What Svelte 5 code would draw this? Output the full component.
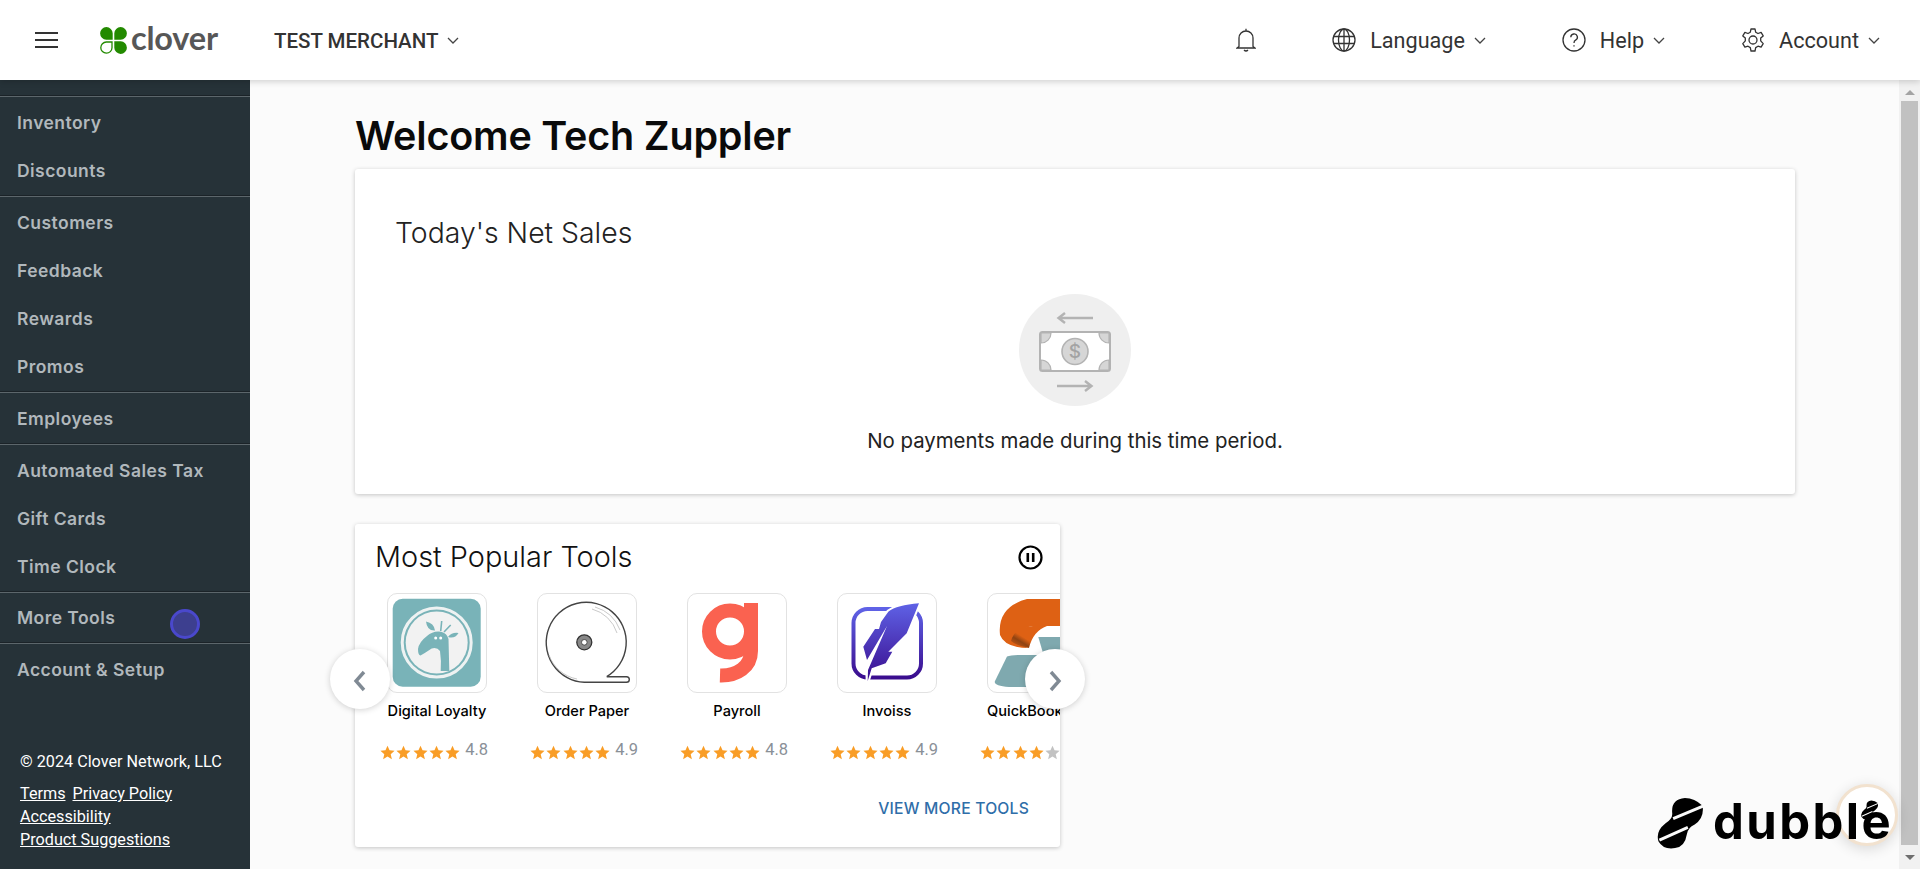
<script>
  const navGroups = [
    { items: ['Inventory', 'Discounts'] },
    { items: ['Customers', 'Feedback', 'Rewards', 'Promos'] },
    { items: ['Employees'] },
    { items: ['Automated Sales Tax', 'Gift Cards', 'Time Clock'] },
    { items: ['More Tools'], tight: true },
    { items: ['Account & Setup'] }
  ];
  const tools = [
    { name: 'Digital Loyalty', rating: '4.8', icon: 'giraffe', stars: 5 },
    { name: 'Order Paper', rating: '4.9', icon: 'paper', stars: 5 },
    { name: 'Payroll', rating: '4.8', icon: 'g', stars: 5 },
    { name: 'Invoiss', rating: '4.9', icon: 'feather', stars: 5 },
    { name: 'QuickBooks', rating: '4.2', icon: 'qb', stars: 4, clip: true }
  ];
  const starPath = 'M7 0.6 L8.9 5 L13.6 5.4 L10 8.6 L11.1 13.3 L7 10.8 L2.9 13.3 L4 8.6 L0.4 5.4 L5.1 5 Z';
</script>

<div class="shell">
  <header class="topbar">
    <div class="burger"><span></span><span></span><span></span></div>
    <div class="brand">
      <svg class="leaf" viewBox="0 0 27 27" aria-hidden="true">
        <path fill="#238a00" d="M12.7 12.7 H6.3 A6.3 6.3 0 1 1 12.7 6.3 Z"/>
        <path fill="#238a00" d="M14.3 12.7 H20.7 A6.3 6.3 0 1 0 14.3 6.3 Z"/>
        <path fill="#238a00" d="M14.3 14.3 H20.7 A6.3 6.3 0 1 1 14.3 20.7 Z"/>
        <path fill="none" stroke="#238a00" stroke-width="1.3" d="M12 15 H6.3 A5.6 5.6 0 1 0 12 20.7 Z"/>
      </svg>
      <span class="wordmark">clover</span>
    </div>
    <button class="merchant"><span>TEST MERCHANT</span>
      <svg class="chev" viewBox="0 0 12 7"><path d="M1 1 L6 6 L11 1"/></svg>
    </button>
    <div class="top-right">
      <svg class="ico bell" viewBox="0 0 20 24"><path d="M3 18.5 V10 A7 7 0 0 1 17 10 V18.5 L19 20 H1 Z M10 3 V0.8 M8 22 Q10 24 12 22"/></svg>
      <button class="top-item">
        <svg class="ico" viewBox="0 0 24 24"><circle cx="12" cy="12" r="11"/><ellipse cx="12" cy="12" rx="5.5" ry="11"/><path d="M12 1 V23 M1.5 8.5 H22.5 M1.5 15.5 H22.5"/></svg>
        <span>Language</span>
        <svg class="chev" viewBox="0 0 12 7"><path d="M1 1 L6 6 L11 1"/></svg>
      </button>
      <button class="top-item">
        <svg class="ico" viewBox="0 0 24 24"><circle cx="12" cy="12" r="11"/><path d="M8.8 9.2 A3.3 3.3 0 1 1 13.6 12.2 Q12 13 12 15 M12 17.2 V18.6"/></svg>
        <span>Help</span>
        <svg class="chev" viewBox="0 0 12 7"><path d="M1 1 L6 6 L11 1"/></svg>
      </button>
      <button class="top-item">
        <svg class="ico" viewBox="0 0 24 24"><path d="M10 1 H14 L14.7 4.2 L17 5.5 L20.1 4.4 L22.2 7.9 L19.7 10.1 V12.9 L22.2 15.6 L20.1 19.2 L17 18.2 L14.7 19.6 L14 23 H10 L9.3 19.6 L7 18.2 L3.9 19.2 L1.8 15.6 L4.3 12.9 V10.1 L1.8 7.9 L3.9 4.4 L7 5.5 L9.3 4.2 Z" stroke-linejoin="round"/><circle cx="12" cy="12" r="4"/></svg>
        <span>Account</span>
        <svg class="chev" viewBox="0 0 12 7"><path d="M1 1 L6 6 L11 1"/></svg>
      </button>
    </div>
  </header>

  <div class="body">
    <aside class="sidebar">
      <nav class="nav">
        {#each navGroups as group}
          <div class="divider"></div>
          <div class="group" class:tight={group.tight}>
            {#each group.items as item}
              <a class="nav-link" href="#top">{item}</a>
            {/each}
          </div>
        {/each}
      </nav>
      <footer class="legal">
        <p class="copy">© 2024 Clover Network, LLC</p>
        <p class="links"><a href="#top">Terms</a><a href="#top">Privacy Policy</a></p>
        <p class="links"><a href="#top">Accessibility</a></p>
        <p class="links"><a href="#top">Product Suggestions</a></p>
      </footer>
      <span class="cursor"></span>
    </aside>

    <main class="main">
      <h1>Welcome Tech Zuppler</h1>

      <section class="card sales">
        <h2>Today's Net Sales</h2>
        <svg class="money" viewBox="0 0 112 112" aria-hidden="true">
          <circle cx="56" cy="56" r="56" fill="#efefef"/>
          <g fill="none" stroke="#b3b3b3" stroke-width="2.4">
            <path d="M74 24 H40 M46 19 L39.5 24 L46 29"/>
            <path d="M38 92 H72 M66 87 L72.5 92 L66 97"/>
          </g>
          <rect x="21" y="38" width="70" height="39" rx="2.5" fill="#fff" stroke="#b3b3b3" stroke-width="2"/>
          <g fill="#d6d6d6" stroke="#b3b3b3" stroke-width="1.2">
            <path d="M22 39 H32 A10 10 0 0 1 22 49 Z"/>
            <path d="M90 39 H80 A10 10 0 0 0 90 49 Z"/>
            <path d="M22 76 H32 A10 10 0 0 0 22 66 Z"/>
            <path d="M90 76 H80 A10 10 0 0 1 90 66 Z"/>
          </g>
          <circle cx="56" cy="57.5" r="13" fill="#d6d6d6" stroke="#b3b3b3" stroke-width="1.6"/>
          <text x="56" y="64" text-anchor="middle" class="dollar">$</text>
        </svg>
        <p class="empty">No payments made during this time period.</p>
      </section>

      <section class="card tools">
        <div class="tools-head">
          <h2>Most Popular Tools</h2>
          <svg class="pause" viewBox="0 0 25 25"><circle cx="12.5" cy="12.5" r="11" fill="none" stroke="#000" stroke-width="2.2"/><path d="M9.8 8 V17 M15.2 8 V17" stroke="#000" stroke-width="2.6"/></svg>
        </div>
        <div class="carousel">
          {#each tools as tool}
            <article class="tile">
              <div class="tile-icon">
                <svg viewBox="0 0 100 100" aria-hidden="true">
                  {#if tool.icon === 'giraffe'}
                    <rect x="5.7" y="5.7" width="88" height="88" rx="10" fill="#79b3b8"/>
                    <circle cx="49.7" cy="49.5" r="34.5" fill="none" stroke="#eef2f2" stroke-width="3"/>
                    <circle cx="49.7" cy="49.5" r="31" fill="#f2f2f2"/>
                    <path fill="#79b3b8" d="M53.7 78 L62.3 78 L61.5 46 Q60 40 54 38.7 Q46 37.5 40 43 Q32 49 31 56 Q31 62 33.5 62.5 Q38 60 44.7 55.5 Q50 54 53 58 Q54.5 68 53.7 78 Z"/>
                    <path fill="#79b3b8" d="M39 28.5 Q47 30 48 37.5 Q40 38 39 28.5 Z M61 44 Q65 39 71.5 40 Q68 46 61 44 Z"/>
                    <path stroke="#79b3b8" stroke-width="1.6" fill="none" d="M54.7 28 L53.7 38 M63.7 32 L57 39"/>
                    <circle cx="48.7" cy="45" r="1.5" fill="#fff"/><circle cx="53.7" cy="45" r="1.5" fill="#fff"/>
                  {:else if tool.icon === 'paper'}
                    <path fill="none" stroke="#444" stroke-width="1.4" d="M69.7 83.7 A40 40 0 1 0 47.3 89.3 H89.5 A2.8 2.8 0 0 0 89.5 83.7 H69.7"/>
                    <path fill="none" stroke="#bbb" stroke-width="0.8" d="M58 14 A38 38 0 0 1 83 37 M55 16 A36 36 0 0 1 80 40 M12 62 A37 37 0 0 0 40 86"/>
                    <circle cx="47.3" cy="49.3" r="7.5" fill="#888" stroke="#333" stroke-width="1.3"/>
                    <circle cx="47.3" cy="49.3" r="2.8" fill="#fff" stroke="#333" stroke-width="0.8"/>
                  {:else if tool.icon === 'g'}
                    <circle cx="43" cy="38.5" r="21" fill="none" stroke="#fa6250" stroke-width="14"/>
                    <path fill="none" stroke="#fa6250" stroke-width="14" d="M64 10 V58 C64 74 50 83 33 82.5"/>
                  {:else if tool.icon === 'feather'}
                    <defs>
                      <linearGradient id="inv" x1="0" y1="0" x2="0" y2="1"><stop offset="0" stop-color="#5f62e6"/><stop offset="1" stop-color="#3a0d8e"/></linearGradient>
                    </defs>
                    <rect x="16.5" y="16" width="67.5" height="68.5" rx="14" fill="none" stroke="url(#inv)" stroke-width="4"/>
                    <path fill="#fff" stroke="#fff" stroke-width="4" d="M82 10.3 Q60 12 51.3 18.7 L26.3 53.7 L30 67 L30.7 88 L34.7 75.3 L48.7 70.3 L55.3 58.7 L51.3 58.7 L69.7 40.3 Z"/>
                    <path fill="url(#inv)" d="M82 10.3 Q60 12 51.3 18.7 L44 29 L42 36 L38 36 L26.3 53.7 L30 67 L50 33 L31 77 L30.7 88 L34.7 75.3 L48.7 70.3 L55.3 58.7 L51.3 58.7 L69.7 40.3 Z"/>
                  {:else}
                    <defs>
                      <linearGradient id="qbo" x1="0" y1="1" x2="0.7" y2="0.3"><stop offset="0" stop-color="#de6114"/><stop offset="0.4" stop-color="#8f4312"/><stop offset="0.6" stop-color="#de6114"/></linearGradient>
                    </defs>
                    <path fill="#de6114" d="M40 6 H100 V33 H46 Q36 34 33 42 Q31 52 42 55 Q18 55 13 42 Q10 14 40 6 Z"/>
                    <path fill="url(#qbo)" d="M46 33 H60 Q46 38 42 55 Q28 52 24 48 Q28 34 46 33 Z"/>
                    <path fill="#7fa9af" d="M51.3 44 H100 V60 H56 Z"/>
                    <path fill="#7fa9af" d="M20 63.5 Q24 62 34 62 H100 V94 H22 Q6 93 8 88 Z"/>
                  {/if}
                </svg>
              </div>
              <div class="tile-name" class:clip={tool.clip}>{tool.name}</div>
              <div class="tile-rating">
                <span class="stars">
                  {#each [0, 1, 2, 3, 4] as i}
                    <svg class="star" viewBox="0 0 14 14" class:off={i >= tool.stars}><path d={starPath}/></svg>
                  {/each}
                </span>
                <span class="score">{tool.rating}</span>
              </div>
            </article>
          {/each}
        </div>
        <div class="tools-foot"><a href="#top">VIEW MORE TOOLS</a></div>
        <button class="arrow prev" aria-label="Previous"><svg viewBox="0 0 14 22"><path d="M11 2 L3 11 L11 20"/></svg></button>
        <button class="arrow next" aria-label="Next"><svg viewBox="0 0 14 22"><path d="M3 2 L11 11 L3 20"/></svg></button>
      </section>
    </main>

    <div class="scrollbar">
      <span class="sb-up"></span>
      <span class="sb-thumb"></span>
      <span class="sb-down"></span>
    </div>
  </div>

  <div class="bubble">
    <svg viewBox="0 0 46 52" aria-hidden="true">
      <path d="M46 8 Q38 0 28 0 Q14 1 15 15 Q16 21 8 26 Q-2 34 1 44 Q6 53 18 51 Q28 50 30 37 Q31 30 38 27 Q48 20 46 8 Z" fill="#000"/>
      <path d="M16 21 L47 8 M2 43 L31 30" stroke="#fff" stroke-width="3"/>
    </svg>
  </div>
  <div class="dubble">
    <svg viewBox="0 0 46 52" aria-hidden="true">
      <path d="M46 8 Q38 0 28 0 Q14 1 15 15 Q16 21 8 26 Q-2 34 1 44 Q6 53 18 51 Q28 50 30 37 Q31 30 38 27 Q48 20 46 8 Z" fill="#000"/>
      <path d="M16 21 L47 8 M2 43 L31 30" stroke="#fafafa" stroke-width="3"/>
    </svg>
    <span>dubble</span>
  </div>
</div>

<style>
  :global(body) { margin: 0; overflow: hidden; background: #fbfbfb; }
  button { background: none; border: 0; padding: 0; font: inherit; color: inherit; }
  p, h1, h2 { margin: 0; }

  .shell { position: relative; height: 869px; display: flex; flex-direction: column; font-family: Roboto, "Liberation Sans", sans-serif; color: #333; overflow: hidden; }

  .topbar { height: 80px; flex: none; display: flex; align-items: center; background: #fff; box-shadow: 0 2px 6px rgba(0,0,0,.16); position: relative; z-index: 2; padding: 0 40px 0 35px; box-sizing: border-box; }
  .burger { width: 23px; display: flex; flex-direction: column; gap: 5px; }
  .burger span { height: 2px; background: #333; }
  .brand { display: flex; align-items: center; margin-left: 42px; gap: 4px; width: 174px; }
  .leaf { width: 27px; height: 27px; flex: none; }
  .wordmark { font: 700 32.5px/1 Lato, sans-serif; color: #575757; letter-spacing: -.2px; margin-top: -4px; }
  .merchant { display: flex; align-items: center; gap: 9px; font: 500 20.5px/1 Roboto, sans-serif; color: #333; }
  .merchant span { margin-top: 2px; }
  .chev { width: 12px; height: 7px; fill: none; stroke: #444; stroke-width: 1.3; flex: none; }
  .top-right { margin-left: auto; display: flex; align-items: center; gap: 76px; }
  .top-item { display: flex; align-items: center; font: 400 21.6px/1 Roboto, sans-serif; color: #333; }
  .top-item span { margin: 2px 9px 0 14px; }
  .ico { width: 24px; height: 24px; fill: none; stroke: #333; stroke-width: 1.3; flex: none; }
  .bell { width: 20px; }

  .body { flex: 1; display: flex; min-height: 0; }

  .sidebar { position: relative; width: 250px; flex: none; background: #263238; padding-top: 15px; box-sizing: border-box; display: flex; flex-direction: column; }
  .divider { height: 2px; box-sizing: border-box; border-top: 1px solid #1b2328; border-bottom: 1px solid #5c666b; }
  .group { padding-top: 2px; display: flex; flex-direction: column; }
  .group.tight { padding-top: 1px; }
  .nav-link { height: 48px; display: flex; align-items: center; padding-left: 17px; font: 600 17.5px/1 Inter, sans-serif; letter-spacing: .45px; color: #b1b8bc; text-decoration: none; }
  .legal { margin-top: auto; padding: 0 0 18px 20px; color: #fff; font: 400 16.2px/20px Roboto, sans-serif; }
  .copy { margin-bottom: 10px; }
  .links { line-height: 23px; display: flex; gap: 7px; }
  .links a { color: #fff; text-decoration: underline; }
  .cursor { position: absolute; left: 170px; top: 529px; width: 30px; height: 30px; box-sizing: border-box; border-radius: 50%; border: 3px solid #4a48cc; background: #3d3f8f; }

  .main { flex: 1; min-width: 0; padding: 33px 104px 0 105px; box-sizing: border-box; }
  h1 { font: 600 39.5px/46px Inter, sans-serif; color: #0a0a0a; margin-bottom: 10px; letter-spacing: -.2px; }
  .card { background: #fff; border-radius: 3px; box-shadow: 0 1px 4px rgba(0,0,0,.22); box-sizing: border-box; }
  .sales { height: 325px; padding: 45px 40px 0; display: flex; flex-direction: column; align-items: center; }
  .sales h2 { align-self: flex-start; font: 300 28.4px/38px Inter, sans-serif; color: #222; }
  .money { width: 112px; height: 112px; margin-top: 42px; flex: none; }
  .dollar { font: 500 19px Inter, sans-serif; fill: #a3a3a3; }
  .empty { margin-top: 21px; font: 400 20.4px/28px Inter, sans-serif; color: #222; }

  .tools { position: relative; margin-top: 30px; width: 705px; height: 323px; }
  .tools-head { height: 66px; padding: 0 17px 0 20px; display: flex; align-items: center; justify-content: space-between; }
  .tools-head h2 { font: 300 28.9px/38px Inter, sans-serif; color: #111; }
  .pause { width: 25px; height: 25px; }
  .carousel { display: flex; overflow: hidden; padding: 3px 0 0 7px; }
  .tile { width: 150px; flex: none; display: flex; flex-direction: column; align-items: center; }
  .tile-icon { width: 100px; height: 100px; box-sizing: border-box; border: 1px solid #e2e2e2; border-radius: 10px; overflow: hidden; background: #fff; flex: none; }
  .tile-icon svg { display: block; width: 100px; height: 100px; margin: -1px; }
  .tile-name { margin-top: 8px; font: 500 14.6px/20px Inter, sans-serif; color: #000; white-space: nowrap; }
  .tile-name.clip { align-self: flex-start; margin-left: 25px; }
  .tile-rating { margin-top: 21px; height: 20px; align-self: flex-start; padding-left: 18px; display: flex; align-items: center; gap: 5px; white-space: nowrap; }
  .stars { display: flex; gap: 1.3px; margin-top: 1px; }
  .star { width: 15px; height: 15px; fill: #f99d26; flex: none; }
  .star.off { fill: #c2c2c2; }
  .score { font: 400 16.5px/1 Roboto, sans-serif; color: #8a9097; margin-top: -3px; }
  .tools-foot { text-align: right; padding: 37px 31px 0 0; }
  .tools-foot a { font: 500 15.7px/20px Inter, sans-serif; color: #2f6ea9; text-decoration: none; letter-spacing: .2px; }
  .arrow { position: absolute; top: 125px; width: 60px; height: 60px; border-radius: 50%; background: #fff; box-shadow: 0 1px 6px rgba(0,0,0,.18); display: flex; align-items: center; justify-content: center; z-index: 1; }
  .arrow svg { width: 14px; height: 22px; fill: none; stroke: #808a94; stroke-width: 3.4; margin-top: 4px; }
  .prev { left: -25px; }
  .next { right: -25px; }

  .scrollbar { width: 21px; flex: none; background: #f1f1f1; display: flex; flex-direction: column; align-items: center; }
  .sb-up, .sb-down { width: 0; height: 0; border-left: 5px solid transparent; border-right: 5px solid transparent; flex: none; }
  .sb-up { border-bottom: 5px solid #a3a3a3; margin: 10px 0 6px; }
  .sb-thumb { width: 17px; height: 744px; background: #c1c1c1; flex: none; }
  .sb-down { border-top: 5px solid #6e6e6e; margin-top: 10px; }

  .bubble { position: absolute; left: 1836px; top: 784px; width: 62px; height: 62px; box-sizing: border-box; border-radius: 50%; background: #fff; border: 3px solid #f2e2cf; box-shadow: 0 3px 14px rgba(0,0,0,.14); display: flex; align-items: center; justify-content: center; }
  .bubble svg { width: 17px; height: 20px; margin: -10px 0 0 4px; }
  .dubble { position: absolute; left: 1657px; top: 798px; display: flex; align-items: center; gap: 10px; height: 51px; }
  .dubble svg { width: 46px; height: 51px; flex: none; }
  .dubble span { font: 700 49px/1 Inter, sans-serif; color: #000; letter-spacing: 2.4px; margin-top: -5px; }
</style>
